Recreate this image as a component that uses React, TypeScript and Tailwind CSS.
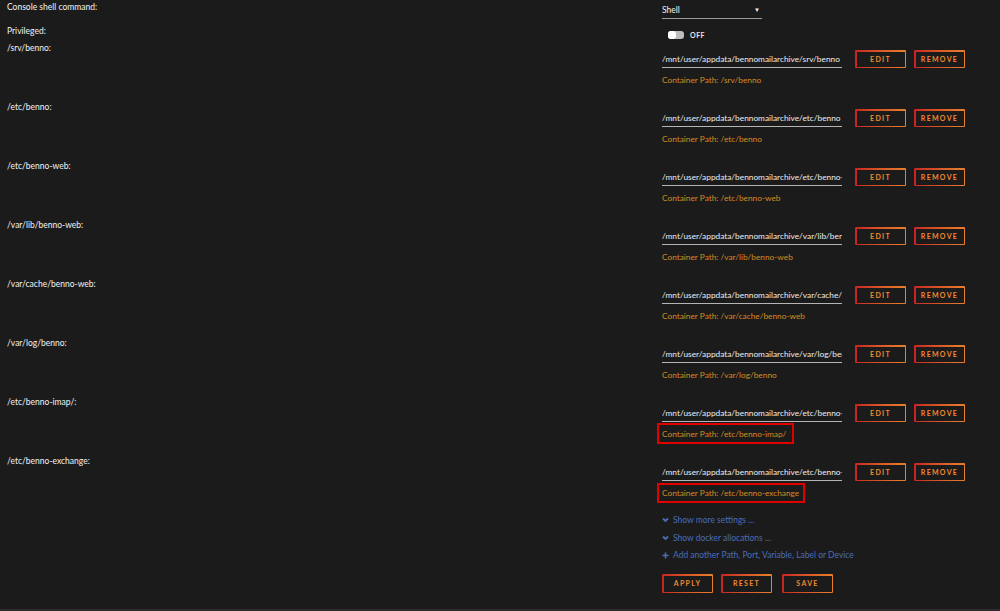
import React from "react";

const rows = [
  { label: "/srv/benno:", host: "/mnt/user/appdata/bennomailarchive/srv/benno", cont: "/srv/benno", box: 0 },
  { label: "/etc/benno:", host: "/mnt/user/appdata/bennomailarchive/etc/benno", cont: "/etc/benno", box: 0 },
  { label: "/etc/benno-web:", host: "/mnt/user/appdata/bennomailarchive/etc/benno-web", cont: "/etc/benno-web", box: 0 },
  { label: "/var/lib/benno-web:", host: "/mnt/user/appdata/bennomailarchive/var/lib/benno-web", cont: "/var/lib/benno-web", box: 0 },
  { label: "/var/cache/benno-web:", host: "/mnt/user/appdata/bennomailarchive/var/cache/benno-web", cont: "/var/cache/benno-web", box: 0 },
  { label: "/var/log/benno:", host: "/mnt/user/appdata/bennomailarchive/var/log/benno", cont: "/var/log/benno", box: 0 },
  { label: "/etc/benno-imap/:", host: "/mnt/user/appdata/bennomailarchive/etc/benno-imap/", cont: "/etc/benno-imap/", box: 1 },
  { label: "/etc/benno-exchange:", host: "/mnt/user/appdata/bennomailarchive/etc/benno-exchange", cont: "/etc/benno-exchange", box: 2 },
];

function GradBtn({ children, h = "h-[18px]" }: { children: React.ReactNode; h?: string }) {
  return (
    <div className={`w-[51px] ${h} p-[1.5px] bg-gradient-to-r from-[#c82222] to-[#e8802c] rounded-[1px]`}>
      <div className="w-full h-full bg-[#1c1b1b] flex items-center justify-center text-[#f08a30] font-bold text-[7px] tracking-[1.3px] leading-none">
        {children}
      </div>
    </div>
  );
}

function Chevron() {
  return (
    <svg width="7" height="6" viewBox="0 0 7 6" className="shrink-0">
      <polyline points="1,1.5 3.5,4 6,1.5" fill="none" stroke="#486dba" strokeWidth="1.8" />
    </svg>
  );
}

function Plus() {
  return (
    <svg width="7" height="7" viewBox="0 0 7 7" className="shrink-0">
      <path d="M3.5 0.5v6M0.5 3.5h6" stroke="#486dba" strokeWidth="1.6" />
    </svg>
  );
}

export default function App() {
  return (
    <div
      className="w-[1000px] h-[611px] bg-[#1c1b1b] text-[#f2f2f2] flex flex-col overflow-hidden"
      style={{ fontFamily: "Lato, 'Open Sans', sans-serif" }}
    >
      <div className="flex-1 flex flex-col text-[8.5px] leading-[10px]">
        {/* Console shell command */}
        <div className="flex h-[24px]">
          <div className="w-[655px] pl-[7px] pt-[2px]">Console shell command:</div>
          <div className="pl-[7px] pt-[5px]">
            <div className="w-[100px] h-[14px] border-b border-[#9a9a9a] flex items-start justify-between pr-[2px]">
              <span>Shell</span>
              <span className="text-[6px] leading-[10px]">▼</span>
            </div>
          </div>
        </div>
        {/* Privileged */}
        <div className="flex h-[19px]">
          <div className="w-[655px] pl-[7px] pt-[2px]">Privileged:</div>
          <div className="pl-[13px] pt-[3px] flex items-center gap-[6px]">
            <div className="w-[16px] h-[8px] rounded-[3px] bg-[#bdbdbd] flex items-center">
              <div className="w-[8px] h-[8px] rounded-[3px] bg-white" />
            </div>
            <span className="text-[7px] font-bold tracking-[0.5px] text-[#e6e6e6]">OFF</span>
          </div>
        </div>
        {/* Path rows */}
        {rows.map((r) => (
          <div key={r.label} className="flex h-[59px]">
            <div className="w-[655px] pl-[7px]">{r.label}</div>
            <div className="pl-[7px] pt-[7px] flex flex-col">
              <div className="flex items-end">
                <div className="w-[180px] h-[18px] border-b border-[#b5b5b5] overflow-hidden whitespace-nowrap pt-[4px] text-[#ececec] text-[8.3px]">
                  {r.host}
                </div>
                <div className="ml-[13px] flex gap-[8px]">
                  <GradBtn>EDIT</GradBtn>
                  <GradBtn>REMOVE</GradBtn>
                </div>
              </div>
              <div className="mt-[6.5px] text-[#d68a1f] text-[8.3px] relative w-max">
                Container Path: {r.cont}
                {r.box === 1 && (
                  <span className="absolute left-[-5px] top-[-6px] w-[137px] h-[21px] border-2 border-[#e00000]" />
                )}
                {r.box === 2 && (
                  <span className="absolute left-[-5px] top-[-5px] w-[148px] h-[20px] border-2 border-[#e00000]" />
                )}
              </div>
            </div>
          </div>
        ))}
        {/* Links */}
        <div className="pl-[662px] mt-[-3.5px] flex flex-col text-[#486dba] text-[8.5px]">
          <div className="h-[17.5px] flex items-center gap-[4px]">
            <Chevron />
            <span>Show more settings ...</span>
          </div>
          <div className="h-[17.5px] flex items-center gap-[4px]">
            <Chevron />
            <span>Show docker allocations ...</span>
          </div>
          <div className="h-[17.5px] flex items-center gap-[4px]">
            <Plus />
            <span>Add another Path, Port, Variable, Label or Device</span>
          </div>
          <div className="flex gap-[8px] mt-[10px]">
            <GradBtn h="h-[19px]">APPLY</GradBtn>
            <GradBtn h="h-[19px]">RESET</GradBtn>
            <div className="ml-[2px]">
              <GradBtn h="h-[19px]">SAVE</GradBtn>
            </div>
          </div>
        </div>
      </div>
      <div className="h-[2px] bg-[#2b2b2b]" />
    </div>
  );
}
